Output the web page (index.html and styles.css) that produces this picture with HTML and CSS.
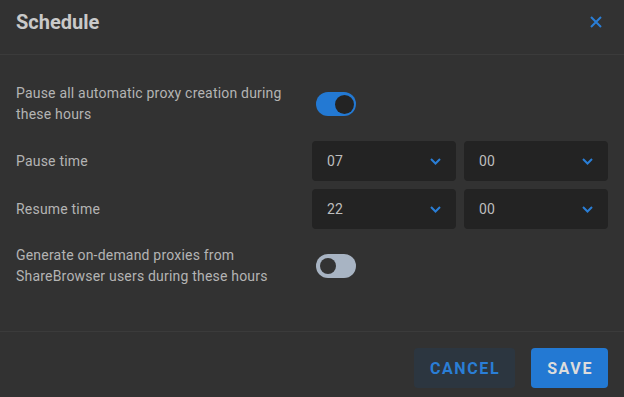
FILE: index.html
```html
<!DOCTYPE html>
<html lang="en">
<head>
<meta charset="utf-8">
<title>Schedule</title>
<link rel="stylesheet" href="styles.css">
</head>
<body>
<div class="dialog">
  <header class="header">
    <h1 class="title">Schedule</h1>
    <button class="close" aria-label="Close">
      <svg width="12" height="12" viewBox="0 0 12 12"><path d="M1 1L11 11M11 1L1 11" stroke="currentColor" stroke-width="2" fill="none"/></svg>
    </button>
  </header>
  <main class="content">
    <div class="row toggle-row">
      <div class="label">Pause all automatic proxy creation during these hours</div>
      <div class="control"><span class="toggle on"><span class="knob"></span></span></div>
    </div>
    <div class="row">
      <div class="label">Pause time</div>
      <div class="control selects">
        <div class="select"><span>07</span><svg class="chev" width="11" height="7" viewBox="0 0 11 7"><path d="M1 1L5.5 5.5L10 1" stroke="currentColor" stroke-width="2" fill="none"/></svg></div>
        <div class="select"><span>00</span><svg class="chev" width="11" height="7" viewBox="0 0 11 7"><path d="M1 1L5.5 5.5L10 1" stroke="currentColor" stroke-width="2" fill="none"/></svg></div>
      </div>
    </div>
    <div class="row">
      <div class="label">Resume time</div>
      <div class="control selects">
        <div class="select"><span>22</span><svg class="chev" width="11" height="7" viewBox="0 0 11 7"><path d="M1 1L5.5 5.5L10 1" stroke="currentColor" stroke-width="2" fill="none"/></svg></div>
        <div class="select"><span>00</span><svg class="chev" width="11" height="7" viewBox="0 0 11 7"><path d="M1 1L5.5 5.5L10 1" stroke="currentColor" stroke-width="2" fill="none"/></svg></div>
      </div>
    </div>
    <div class="row toggle-row">
      <div class="label">Generate on-demand proxies from ShareBrowser users during these hours</div>
      <div class="control"><span class="toggle off"><span class="knob"></span></span></div>
    </div>
  </main>
  <footer class="footer">
    <button class="btn cancel">CANCEL</button>
    <button class="btn save">SAVE</button>
  </footer>
</div>
</body>
</html>
```
FILE: styles.css
```css
html, body {
  margin: 0;
  padding: 0;
  background: #323232;
}
body {
  font-family: Roboto, "Liberation Sans", sans-serif;
  color: #b4b4b4;
  width: 624px;
  height: 397px;
  overflow: hidden;
}
.dialog {
  display: flex;
  flex-direction: column;
}
.header {
  box-sizing: border-box;
  border-bottom: 1px solid #3b3b3b;
  display: flex;
  align-items: center;
  justify-content: space-between;
  padding: 0 16px 11px 16px;
  height: 55px;
}
.title {
  margin: 0;
  font-size: 20px;
  font-weight: 700;
  color: #c9c9c9;
  line-height: 24px;
}
.close {
  background: none;
  border: 0;
  padding: 0;
  margin-right: 6px;
  color: #2a7ed6;
  display: flex;
}
.content {
  padding: 20px 16px 36px 16px;
  display: flex;
  flex-direction: column;
  gap: 8px;
  border-bottom: 1px solid #3b3b3b;
}
.row {
  display: grid;
  grid-template-columns: 296px 296px;
  align-items: center;
}
.toggle-row {
  padding: 8px 0;
}
.label {
  font-size: 14px;
  line-height: 21px;
  letter-spacing: 0.2px;
  color: #b4b4b4;
  padding-right: 12px;
}
.control {
  display: flex;
  align-items: center;
}
.selects {
  gap: 8px;
}
.select {
  width: 144px;
  height: 40px;
  box-sizing: border-box;
  background: #232323;
  border-radius: 4px;
  display: flex;
  align-items: center;
  justify-content: space-between;
  padding: 0 15px 0 15px;
  font-size: 14px;
  letter-spacing: 0.2px;
  color: #bdbdbd;
}
.chev {
  color: #2a7ed6;
  margin-top: 1px;
}
.toggle {
  margin-left: 4px;
  width: 40px;
  height: 24px;
  border-radius: 12px;
  display: flex;
  align-items: center;
  box-sizing: border-box;
}
.toggle.on {
  background: #2379d3;
  justify-content: flex-end;
  padding-right: 2px;
}
.toggle.off {
  background: #a8b4c3;
  padding-left: 4px;
}
.knob {
  border-radius: 50%;
  background: #232323;
}
.on .knob {
  width: 19px;
  height: 19px;
}
.off .knob {
  width: 16px;
  height: 16px;
  background: #333333;
}
.footer {
  display: flex;
  justify-content: flex-end;
  gap: 16px;
  padding: 16px 16px 9px 16px;
}
.btn {
  height: 40px;
  border: 0;
  border-radius: 4px;
  font-family: Roboto, "Liberation Sans", sans-serif;
  font-weight: 700;
  font-size: 16px;
  letter-spacing: 1.6px;
  padding: 0 15px 0 16px;
}
.cancel {
  background: #2c3640;
  color: #2a7ed6;
}
.save {
  background: #2379d3;
  color: #dcdcdc;
}
```
